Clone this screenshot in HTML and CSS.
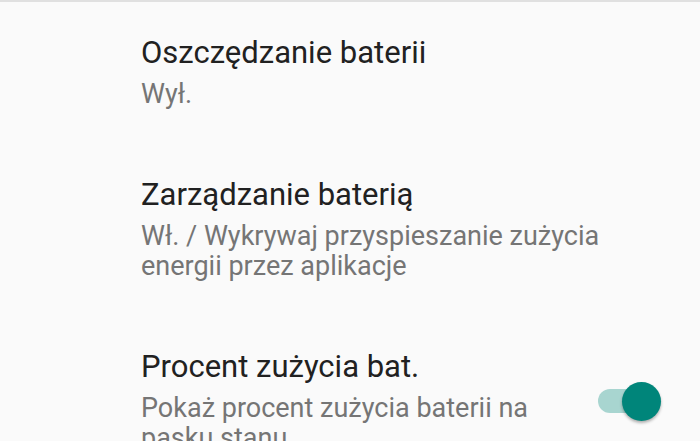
FILE: index.html
```html
<!DOCTYPE html>
<html>
  <head>
    <meta charset="UTF-8" />
    <title>Bateria</title>
    <link rel="stylesheet" href="styles.css">
  </head>
  <body>
    <div class="pref-list">
      <div class="pref-item">
        <div class="pref-text">
          <div class="pref-title">Oszczędzanie baterii</div>
          <div class="pref-summary">Wył.</div>
        </div>
      </div>
      <div class="pref-item">
        <div class="pref-text">
          <div class="pref-title">Zarządzanie baterią</div>
          <div class="pref-summary">Wł. / Wykrywaj przyspieszanie zużycia energii przez aplikacje</div>
        </div>
      </div>
      <div class="pref-item">
        <div class="pref-text">
          <div class="pref-title">Procent zużycia bat.</div>
          <div class="pref-summary">Pokaż procent zużycia baterii na pasku stanu</div>
        </div>
        <div class="switch on">
          <div class="switch-track"></div>
          <div class="switch-thumb"></div>
        </div>
      </div>
    </div>
  </body>
</html>
```

FILE: styles.css
```css
body {
  font-family: Roboto, "Noto Sans", sans-serif;
  background-color: #fafafa;
  margin: 0;
  padding: 0;
  overflow: hidden;
}

.pref-list {
  border-top: 2px solid #e0e0e0;
}

.pref-item {
  display: flex;
  align-items: center;
  padding: 33px 38px 35px 141px;
}

.pref-text {
  flex: 1;
}

.pref-title {
  font-size: 31px;
  line-height: 36px;
  color: #212121;
}

.pref-summary {
  margin-top: 8px;
  font-size: 27px;
  line-height: 30px;
  color: #757575;
}

.switch {
  position: relative;
  width: 64px;
  height: 40px;
  margin-left: 20px;
}

.switch-track {
  position: absolute;
  left: 0;
  top: 8px;
  width: 56px;
  height: 24px;
  border-radius: 12px;
  background-color: #a8d5d0;
}

.switch-thumb {
  position: absolute;
  left: 24px;
  top: 1px;
  width: 39px;
  height: 39px;
  border-radius: 50%;
  background-color: #00857a;
  box-shadow: 0 2px 3px rgba(0, 0, 0, 0.3);
}
```
